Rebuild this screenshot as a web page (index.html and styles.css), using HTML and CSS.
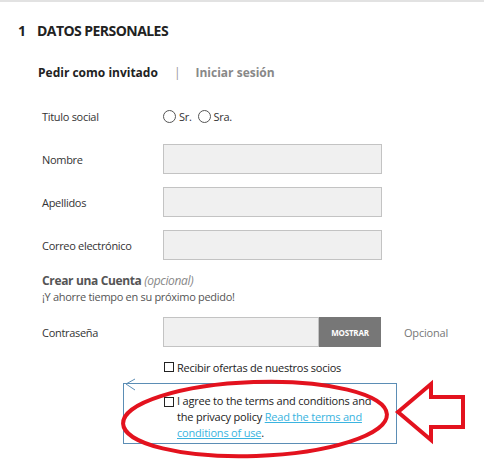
FILE: index.html
```html
<!DOCTYPE html>
<html>
<head>
<meta charset="utf-8">
<link rel="stylesheet" href="styles.css">
</head>
<body>
<div class="page">
  <h1 class="step"><span class="num">1</span>DATOS PERSONALES</h1>
  <div class="tabs">
    <span class="tab active">Pedir como invitado</span>
    <span class="sep">|</span>
    <span class="tab">Iniciar sesión</span>
  </div>
  <div class="form">
    <div class="row">
      <label class="lbl">Titulo social</label>
      <div class="radios">
        <span class="radio"></span><span class="rtxt">Sr.</span>
        <span class="radio"></span><span class="rtxt">Sra.</span>
      </div>
    </div>
    <div class="row">
      <label class="lbl">Nombre</label>
      <div class="input"></div>
    </div>
    <div class="row">
      <label class="lbl">Apellidos</label>
      <div class="input"></div>
    </div>
    <div class="row">
      <label class="lbl">Correo electrónico</label>
      <div class="input"></div>
    </div>
    <div class="account">
      <div class="acc-title">Crear una Cuenta <em>(opcional)</em></div>
      <div class="acc-sub">¡Y ahorre tiempo en su próximo pedido!</div>
    </div>
    <div class="row pw">
      <label class="lbl">Contraseña</label>
      <div class="input short"></div>
      <div class="btn">MOSTRAR</div>
      <span class="opt">Opcional</span>
    </div>
    <div class="check-row">
      <span class="box"></span><span>Recibir ofertas de nuestros socios</span>
    </div>
    <div class="terms">
      <svg class="chev" width="14" height="14" viewBox="0 0 14 14"><polyline points="11,1 2,6 11,12" fill="none" stroke="#5b8db5" stroke-width="1"/></svg>
      <div class="terms-inner">
        <span class="box"></span>
        <p>I agree to the terms and conditions and the privacy policy <a href="#">Read the terms and conditions of use</a>.</p>
      </div>
    </div>
  </div>
  <svg class="annot" width="484" height="464" viewBox="0 0 484 464">
    <ellipse cx="255" cy="419" rx="132" ry="37" transform="rotate(-2 255 419)" fill="none" stroke="#e3121e" stroke-width="4"/>
    <polygon points="398,412 431,384 431,397 463,397 463,427 431,427 431,440" fill="#fff" stroke="#e3121e" stroke-width="4" stroke-linejoin="miter"/>
  </svg>
</div>
</body>
</html>
```
FILE: styles.css
```css
* { box-sizing: border-box; }
html, body { margin: 0; padding: 0; background: #fff; }
body {
  font-family: "Open Sans", "Noto Sans", sans-serif;
  color: #333;
  width: 484px;
  height: 464px;
  overflow: hidden;
}
.page {
  position: relative;
  height: 464px;
  border-top: 2px solid #e2e2e2;
}
.step {
  margin: 0;
  padding: 19px 0 0 18px;
  font-size: 14px;
  line-height: 19px;
  font-weight: 700;
  color: #222;
  letter-spacing: -0.55px;
}
.step .num { display: inline-block; width: 19px; }
.tabs {
  margin-top: 24px;
  padding-left: 38px;
  display: flex;
  align-items: center;
  font-size: 12px;
  line-height: 17px;
  font-weight: 700;
}
.tab { color: #888; }
.tab.active { color: #222; }
.sep { color: #999; font-weight: 400; margin: 0 15px 0 16px; }
.form { margin-top: 20px; padding-left: 42px; }
.row {
  display: flex;
  align-items: center;
  height: 30px;
  margin-bottom: 13px;
}
.lbl {
  width: 121px;
  flex: none;
  font-size: 11px;
  letter-spacing: -0.3px;
  color: #333;
}
.radios { display: flex; align-items: center; font-size: 11px; letter-spacing: -0.3px; }
.radio {
  width: 13px; height: 13px;
  border: 1.2px solid #555;
  border-radius: 50%;
  display: inline-block;
}
.rtxt { margin: 0 6px 0 3px; color: #333; }
.input {
  width: 219px;
  height: 30px;
  background: #f0f0f0;
  border: 1px solid #c3c3c3;
}
.account { margin-top: 11px; line-height: 16px; }
.acc-title { font-size: 12px; font-weight: 700; color: #555; letter-spacing: -0.35px; }
.acc-title em { font-weight: 400; color: #888; }
.acc-sub { font-size: 11px; color: #555; letter-spacing: -0.3px; }
.row.pw { margin-top: 12px; margin-bottom: 12px; }
.input.short { width: 156px; }
.btn {
  width: 62px;
  height: 30px;
  background: #777;
  color: #fff;
  font-size: 8px;
  font-weight: 700;
  display: flex;
  align-items: center;
  justify-content: center;
  letter-spacing: -0.2px;
}
.opt { margin-left: 23px; font-size: 11px; color: #777; letter-spacing: -0.2px; }
.check-row {
  display: flex;
  align-items: center;
  padding-left: 122px;
  font-size: 11px;
  letter-spacing: -0.25px;
  color: #222;
  height: 16px;
}
.box {
  width: 10px; height: 10px;
  border: 1.5px solid #222;
  display: inline-block;
  flex: none;
  margin-right: 3px;
}
.terms {
  position: relative;
  margin: 8px 0 0 81px;
  width: 274px;
  height: 61px;
  border: 1px solid #5b8db5;
}
.chev { position: absolute; left: 0; top: -6px; }
.terms-inner {
  display: flex;
  align-items: flex-start;
  padding: 9px 0 0 40px;
}
.terms-inner .box { margin-top: 4px; }
.terms p {
  margin: 0;
  width: 205px;
  font-size: 11px;
  letter-spacing: -0.2px;
  line-height: 16px;
  color: #222;
}
.terms a { color: #3ab4e0; text-decoration: underline; }
.annot { position: absolute; left: 0; top: -2px; pointer-events: none; }
```
